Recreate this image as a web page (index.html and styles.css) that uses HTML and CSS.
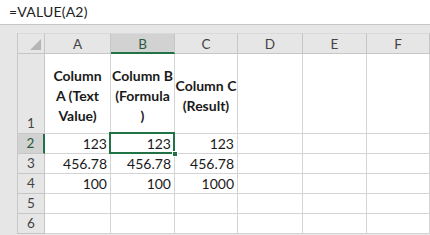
FILE: index.html
```html
<!DOCTYPE html>
<html>
<head>
<meta charset="utf-8">
<link rel="stylesheet" href="styles.css">
</head>
<body>
<div class="formula-bar">=VALUE(A2)</div>
<div class="sheet">
  <div class="grid">
    <div class="hdr corner"><span class="tri"></span></div>
    <div class="hdr col">A</div>
    <div class="hdr col sel-col">B</div>
    <div class="hdr col">C</div>
    <div class="hdr col">D</div>
    <div class="hdr col">E</div>
    <div class="hdr col">F</div>

    <div class="hdr row">1</div>
    <div class="cell title">Column<br>A (Text<br>Value)</div>
    <div class="cell title">Column B<br>(Formula<br>)</div>
    <div class="cell title">Column C<br>(Result)</div>
    <div class="cell"></div>
    <div class="cell"></div>
    <div class="cell"></div>

    <div class="hdr row sel-row">2</div>
    <div class="cell num">123</div>
    <div class="cell num active">123<span class="handle"></span></div>
    <div class="cell num">123</div>
    <div class="cell"></div>
    <div class="cell"></div>
    <div class="cell"></div>

    <div class="hdr row">3</div>
    <div class="cell num">456.78</div>
    <div class="cell num">456.78</div>
    <div class="cell num">456.78</div>
    <div class="cell"></div>
    <div class="cell"></div>
    <div class="cell"></div>

    <div class="hdr row">4</div>
    <div class="cell num">100</div>
    <div class="cell num">100</div>
    <div class="cell num">1000</div>
    <div class="cell"></div>
    <div class="cell"></div>
    <div class="cell"></div>

    <div class="hdr row">5</div>
    <div class="cell"></div>
    <div class="cell"></div>
    <div class="cell"></div>
    <div class="cell"></div>
    <div class="cell"></div>
    <div class="cell"></div>

    <div class="hdr row">6</div>
    <div class="cell"></div>
    <div class="cell"></div>
    <div class="cell"></div>
    <div class="cell"></div>
    <div class="cell"></div>
    <div class="cell"></div>
  </div>
</div>
</body>
</html>
```
FILE: styles.css
```css
* { box-sizing: border-box; }
html, body {
  margin: 0;
  padding: 0;
  width: 430px;
  height: 235px;
  overflow: hidden;
  background: #e6e6e6;
  font-family: Lato, "Liberation Sans", sans-serif;
  color: #222;
}
.formula-bar {
  height: 25px;
  background: #fff;
  border-bottom: 1px solid #c6c6c6;
  padding: 3px 0 0 9px;
  font-size: 14px;
  line-height: 17px;
  color: #222;
  letter-spacing: 0.2px;
}
.sheet {
  padding: 8px 0 0 17px;
  background: #e6e6e6;
}
.grid {
  display: grid;
  grid-template-columns: 27px 66px 64px 63px 65px 64px 63px;
  grid-template-rows: 21px 80px 20px 20px 20px 20px 20px;
  background: #fff;
  border-left: 1px solid #c8c8c8;
  width: 413px;
}
.hdr {
  background: #e6e6e6;
  color: #444;
  font-size: 13.5px;
  border-right: 1px solid #c6c6c6;
  border-bottom: 1px solid #c6c6c6;
  display: flex;
  justify-content: center;
}
.corner {
  position: relative;
  border-right: 1px solid #c6c6c6;
  border-top: 1px solid #dadada;
}
.tri {
  position: absolute;
  right: 3px;
  bottom: 3px;
  width: 0;
  height: 0;
  border-left: 11px solid transparent;
  border-bottom: 11px solid #b5b5b5;
}
.col {
  align-items: center;
  padding-top: 1px;
  border-top: 1px solid #dadada;
}
.sel-col {
  background: #d2d2d2;
  color: #2b5b3f;
  border-bottom: 2px solid #217346;
}
.row {
  align-items: flex-end;
  padding-bottom: 1px;
  line-height: 18px;
}
.sel-row {
  background: #d2d2d2;
  color: #2b5b3f;
  border-right: 2px solid #217346;
}
.cell {
  border-right: 1px solid #d4d4d4;
  border-bottom: 1px solid #d4d4d4;
  font-size: 13.5px;
  color: #1a1a1a;
}
.title {
  font-weight: bold;
  font-size: 14px;
  text-align: center;
  display: flex;
  align-items: center;
  justify-content: center;
  line-height: 20px;
  padding: 4px 0 0 0;
}
.num {
  text-align: right;
  padding-right: 3px;
  line-height: 19px;
  font-size: 14px;
}
.active {
  position: relative;
}
.active::after {
  content: "";
  position: absolute;
  left: -2px;
  top: -2px;
  right: -1px;
  bottom: -1px;
  border: 2px solid #217346;
  pointer-events: none;
}
.handle {
  position: absolute;
  right: -4px;
  bottom: -4px;
  width: 6px;
  height: 6px;
  background: #217346;
  border: 1px solid #fff;
  z-index: 2;
}
```
